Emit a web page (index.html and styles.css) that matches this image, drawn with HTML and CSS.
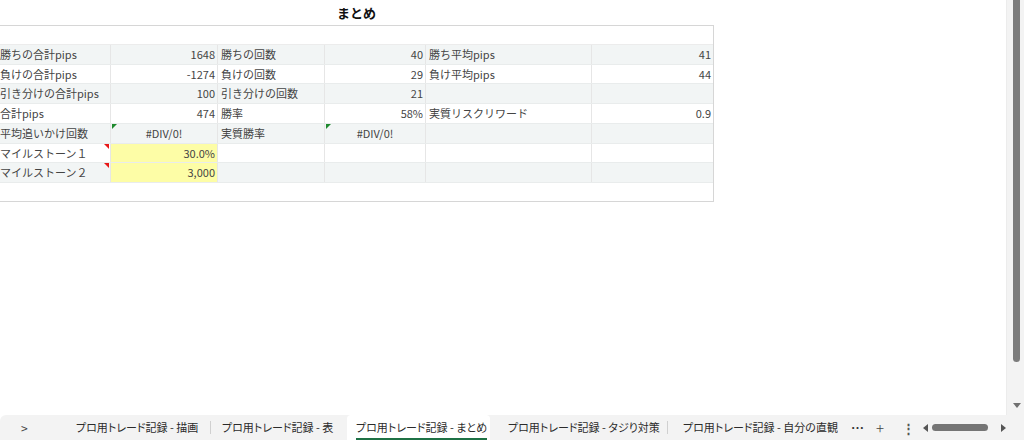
FILE: index.html
```html
<!DOCTYPE html>
<html lang="ja">
<head>
<meta charset="utf-8">
<title>まとめ</title>
<link rel="stylesheet" href="styles.css">
</head>
<body>
<div class="app">
  <div class="main">
    <div class="sheet">
      <div class="title">まとめ</div>
      <div class="box">
        <div class="blank"></div>
        <div class="row alt">
          <div class="c lbl">勝ちの合計pips</div><div class="c num">1648</div>
          <div class="c lbl">勝ちの回数</div><div class="c num">40</div>
          <div class="c lbl">勝ち平均pips</div><div class="c num last">41</div>
        </div>
        <div class="row">
          <div class="c lbl">負けの合計pips</div><div class="c num">-1274</div>
          <div class="c lbl">負けの回数</div><div class="c num">29</div>
          <div class="c lbl">負け平均pips</div><div class="c num last">44</div>
        </div>
        <div class="row alt">
          <div class="c lbl">引き分けの合計pips</div><div class="c num">100</div>
          <div class="c lbl">引き分けの回数</div><div class="c num">21</div>
          <div class="c lbl"></div><div class="c num last"></div>
        </div>
        <div class="row">
          <div class="c lbl">合計pips</div><div class="c num">474</div>
          <div class="c lbl">勝率</div><div class="c num">58%</div>
          <div class="c lbl">実質リスクリワード</div><div class="c num last">0.9</div>
        </div>
        <div class="row alt">
          <div class="c lbl">平均追いかけ回数</div><div class="c ctr green">#DIV/0!</div>
          <div class="c lbl">実質勝率</div><div class="c ctr green">#DIV/0!</div>
          <div class="c lbl"></div><div class="c num last"></div>
        </div>
        <div class="row">
          <div class="c lbl red">マイルストーン１</div><div class="c num yellow">30.0%</div>
          <div class="c lbl"></div><div class="c num"></div>
          <div class="c lbl"></div><div class="c num last"></div>
        </div>
        <div class="row alt">
          <div class="c lbl red">マイルストーン２</div><div class="c num yellow">3,000</div>
          <div class="c lbl"></div><div class="c num"></div>
          <div class="c lbl"></div><div class="c num last"></div>
        </div>
        <div class="blank bottom"></div>
      </div>
    </div>
    <div class="vscroll">
      <div class="vthumb"></div>
      <div class="varrow"></div>
    </div>
  </div>
  <div class="tabbar">
    <div class="tabs">
      <span class="nav">&gt;</span>
      <span class="tab t1">プロ用トレード記録 - 描画</span>
      <span class="sep"></span>
      <span class="tab t2">プロ用トレード記録 - 表</span>
      <span class="tab active"><span class="atext">プロ用トレード記録 - まとめ</span></span>
      <span class="tab t4">プロ用トレード記録 - タジり対策</span>
      <span class="sep"></span>
      <span class="tab t5">プロ用トレード記録 - 自分の直観を</span>
    </div>
    <span class="more">⋯</span>
    <span class="plus">+</span>
    <span class="kebab">⋮</span>
    <div class="hscroll">
      <span class="harrow left"></span>
      <span class="hthumb"></span>
      <span class="harrow right"></span>
    </div>
  </div>
</div>
</body>
</html>
```

FILE: styles.css
```css
* { box-sizing: border-box; }
html, body {
  margin: 0;
  padding: 0;
  background: #ffffff;
}
body {
  width: 1024px;
  height: 440px;
  overflow: hidden;
  font-family: "Noto Sans CJK JP", "Noto Sans", sans-serif;
  color: #333333;
}
.app {
  display: flex;
  flex-direction: column;
  width: 1024px;
  height: 440px;
}
.main {
  display: flex;
  height: 415px;
}
.sheet {
  width: 1006px;
  overflow: hidden;
}
.title {
  width: 713px;
  height: 25px;
  line-height: 25px;
  text-align: center;
  font-size: 13px;
  font-weight: bold;
  color: #111111;
}
.box {
  margin-left: -4px;
  width: 718px;
  border: 1px solid #d6d6d6;
  font-size: 11px;
}
.blank {
  height: 19px;
  border-bottom: 1px solid #ececec;
}
.blank.bottom {
  border-bottom: none;
  height: 18px;
}
.row {
  display: grid;
  grid-template-columns: 114px 107px 107px 101px 166px 121px;
  height: 19.72px;
  border-bottom: 1px solid #e9ecec;
  background: #ffffff;
}
.row.alt {
  background: #f2f5f5;
}
.c {
  position: relative;
  border-right: 1px solid #e6e6e6;
  white-space: nowrap;
  overflow: hidden;
  line-height: 18.5px;
  color: #444444;
}
.c.last { border-right: none; }
.lbl { padding-left: 3px; }
.num { text-align: right; padding-right: 2px; }
.ctr { text-align: center; }
.yellow { background: #fdfda6; }
.green::before {
  content: "";
  position: absolute;
  left: 1px;
  top: 0;
  border-top: 5px solid #1e8a2e;
  border-right: 5px solid transparent;
}
.red::after {
  content: "";
  position: absolute;
  right: 1px;
  top: 0;
  border-top: 5px solid #e81818;
  border-left: 5px solid transparent;
}
.vscroll {
  position: relative;
  width: 18px;
  height: 415px;
  background: #f3f3f3;
  border-left: 1px solid #ececec;
}
.vthumb {
  position: absolute;
  left: 6px;
  top: 0;
  width: 7px;
  height: 362px;
  border-radius: 0 0 4px 4px;
  background: #7c7c7c;
}
.varrow {
  position: absolute;
  left: 6px;
  top: 403px;
  border-top: 5px solid #707070;
  border-left: 4px solid transparent;
  border-right: 4px solid transparent;
}
.tabbar {
  display: flex;
  align-items: center;
  height: 25px;
  background: #f3f3f3;
  border-top-left-radius: 6px;
  font-size: 11px;
  color: #2b2b2b;
  font-feature-settings: "palt";
}
.tabs {
  display: flex;
  align-items: stretch;
  flex-shrink: 0;
  height: 25px;
  width: 840px;
  overflow: hidden;
  white-space: nowrap;
}
.nav {
  flex-shrink: 0;
  width: 76px;
  padding-left: 21px;
  line-height: 25px;
  font-size: 12px;
  color: #444;
}
.tab {
  flex-shrink: 0;
  line-height: 25px;
  white-space: nowrap;
  overflow: hidden;
}
.t1 { width: 134px; }
.t2 { width: 136px; padding-left: 11px; }
.sep {
  flex-shrink: 0;
  width: 1px;
  margin: 6px 0;
  background: #d0d0d0;
}
.active {
  width: 143px;
  padding-left: 9px;
  background: #ffffff;
  border-radius: 4px 4px 0 0;
}
.atext {
  display: inline-block;
  line-height: 21px;
  border-bottom: 2px solid #1e7145;
}
.t4 { width: 177px; padding-left: 18px; }
.t5 { width: 170px; padding-left: 15px; }
.more {
  flex-shrink: 0;
  width: 28px;
  padding-left: 11px;
  font-size: 13px;
  font-weight: bold;
  color: #333;
}
.plus {
  flex-shrink: 0;
  width: 30px;
  padding-left: 8px;
  font-size: 15px;
  font-weight: 300;
  color: #444;
}
.kebab {
  flex-shrink: 0;
  width: 20px;
  padding-left: 4px;
  font-size: 13px;
  font-weight: bold;
  color: #555;
}
.hscroll {
  display: flex;
  align-items: center;
  height: 25px;
  padding-left: 5px;
}
.harrow {
  width: 0;
  height: 0;
  border-top: 4px solid transparent;
  border-bottom: 4px solid transparent;
}
.harrow.left { border-right: 5px solid #555; }
.harrow.right { border-left: 5px solid #555; margin-left: 13px; }
.hthumb {
  width: 56px;
  height: 7px;
  margin-left: 4px;
  border-radius: 4px;
  background: #757575;
}
```
